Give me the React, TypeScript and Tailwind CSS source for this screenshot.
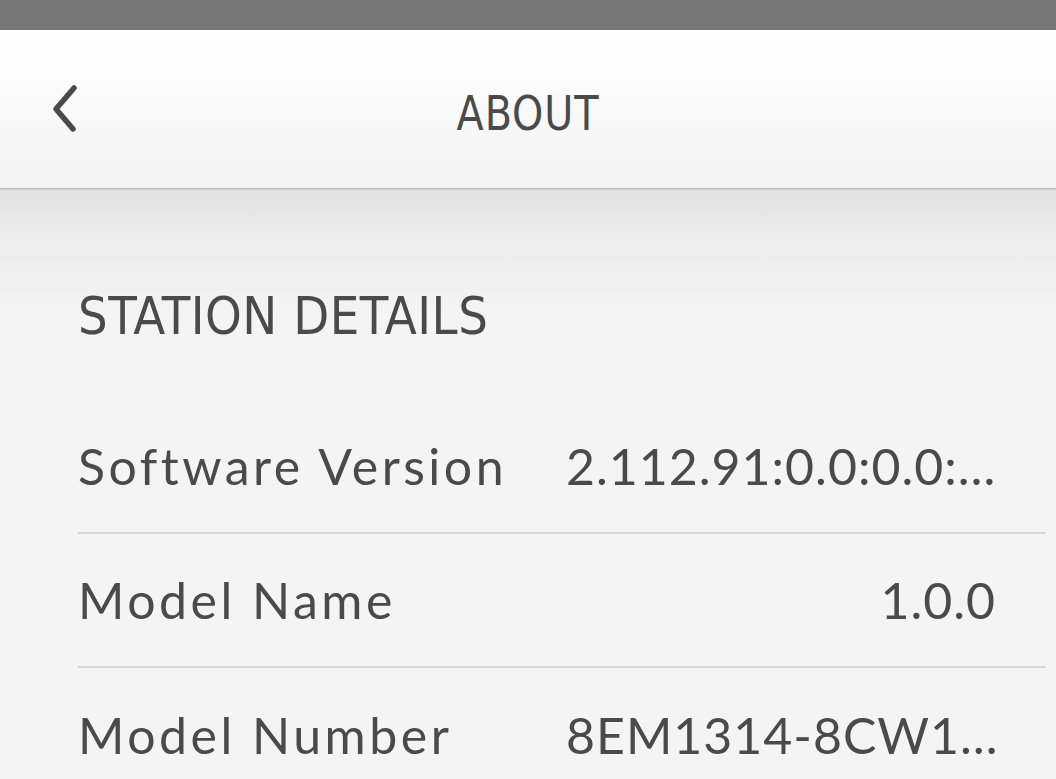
import React from 'react';

const rows = [
  { label: 'Software Version', value: '2.112.91:0.0:0.0:…', cut: true },
  { label: 'Model Name', value: '1.0.0', cut: false },
  { label: 'Model Number', value: '8EM1314-8CW1…', cut: true },
];

const BackChevron: React.FC = () => (
  <svg width="34" height="50" viewBox="0 0 34 50" fill="none">
    <path d="M27 5 L9 26 L26 46" stroke="#4a4a4a" strokeWidth="5.5" strokeLinecap="round" strokeLinejoin="round" />
  </svg>
);

export default function App() {
  return (
    <div className="w-[1056px] h-[779px] overflow-hidden bg-[#f4f4f4] text-[#4a4a4a] font-['Lato','Open_Sans',sans-serif] flex flex-col">
      {/* status bar */}
      <div className="h-[30px] shrink-0 bg-[#767676]" />

      {/* header */}
      <header className="relative z-10 h-[158px] shrink-0 flex items-center pt-[7px] bg-[linear-gradient(to_bottom,#ffffff,#f3f3f3)] shadow-[0_1px_2px_rgba(0,0,0,0.25)]">
        <button className="absolute left-[47px] top-[53px]">
          <BackChevron />
        </button>
        <h1 className="w-full text-center text-[48px] leading-none tracking-[1px] font-['DejaVu_Sans_Condensed','Roboto',sans-serif] font-normal scale-x-[0.92]">
          ABOUT
        </h1>
      </header>

      {/* content */}
      <main className="flex-1 pl-[78px] pr-[10px] bg-[linear-gradient(to_bottom,#e2e2e2_0px,#ececec_50px,#f4f4f4_130px)]">
        <h2 className="mt-[98px] mb-[54px] h-[60px] flex items-center text-[52px] leading-none tracking-[0.5px] font-['DejaVu_Sans_Condensed','Roboto',sans-serif] font-normal">
          STATION DETAILS
        </h2>

        {rows.map((row, i) => (
          <div
            key={row.label}
            className={
              'h-[134px] flex items-center pr-[50px] ' +
              (i < rows.length - 1 ? 'border-b-2 border-[#d8d8d8]' : '')
            }
          >
            <div className="flex-1 text-[50px] leading-none tracking-[3.5px] whitespace-nowrap">
              {row.label}
            </div>
            <div
              className={
                'w-[430px] text-[50px] leading-none tracking-[1px] whitespace-nowrap ' +
                (row.cut ? 'text-left' : 'text-right')
              }
            >
              {row.value}
            </div>
          </div>
        ))}
      </main>
    </div>
  );
}
